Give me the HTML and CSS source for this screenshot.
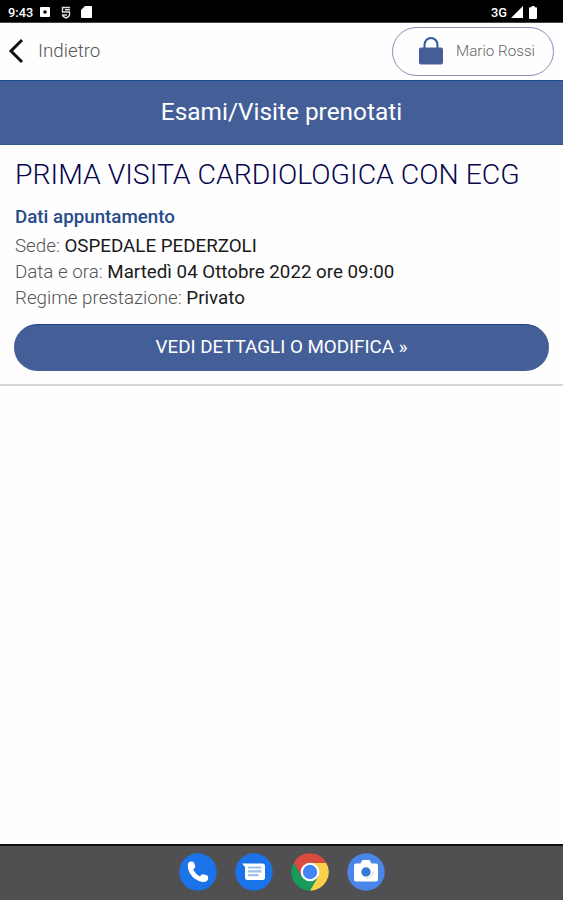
FILE: index.html
```html
<!DOCTYPE html>
<html lang="it">
<head>
<meta charset="UTF-8" />
<meta name="viewport" content="width=device-width, initial-scale=1" />
<title>Esami/Visite prenotati</title>
<link rel="stylesheet" href="styles.css">
</head>
<body>

<div class="statusbar">
  <span class="clock">9:43</span>
  <svg class="st-app" width="10" height="10" viewBox="0 0 10 10"><rect width="10" height="10" rx="1" fill="#fff"/><circle cx="5" cy="5" r="1.800" fill="#000"/></svg>
  <svg class="st-vpn" width="10" height="13" viewBox="0 0 10 13"><path d="M9 1.500H1.500V6h7v3q0 1.500-3.500 3-3.500-1.500-3.500-3M4 3.700h5M1 9h5" fill="none" stroke="#ddd" stroke-width="1.400"/></svg>
  <svg class="st-sd" width="11" height="12" viewBox="0 0 11 12"><path d="M4 0h6q1 0 1 1v10q0 1-1 1H1q-1 0-1-1V4z" fill="#fff"/></svg>
  <span class="network">3G</span>
  <svg class="st-signal" width="12" height="12" viewBox="0 0 12 12"><path d="M12 0v12H0z" fill="#fff"/></svg>
  <svg class="st-battery" width="8" height="13" viewBox="0 0 8 13"><path d="M2.500 0h3v1.300H7q1 0 1 1V12q0 1-1 1H1q-1 0-1-1V2.300q0-1 1-1h1.500z" fill="#fff"/></svg>
</div>

<header class="topbar">
  <a class="back">
    <svg width="16" height="26" viewBox="0 0 16 26"><path d="M14 2L3 13l11 11" fill="none" stroke="#111" stroke-width="3"/></svg>
    <span>Indietro</span>
  </a>
  <div class="user">
    <svg width="24" height="28" viewBox="0 0 24 28"><path d="M5.500 12V8a6.500 7 0 0 1 13 0v4" fill="none" stroke="#2e5c98" stroke-width="2"/><rect y="10.500" width="24" height="17" rx="2" fill="#445f98"/></svg>
    <span>Mario Rossi</span>
  </div>
</header>

<h1 class="page-title">Esami/Visite prenotati</h1>

<main>
  <section class="booking">
    <h2>PRIMA VISITA CARDIOLOGICA CON ECG</h2>
    <h3>Dati appuntamento</h3>
    <p>Sede: <b>OSPEDALE PEDERZOLI</b></p>
    <p>Data e ora: <b>Martedì 04 Ottobre 2022 ore 09:00</b></p>
    <p>Regime prestazione: <b>Privato</b></p>
    <a class="btn">VEDI DETTAGLI O MODIFICA »</a>
  </section>
</main>

<nav class="dock">
  <svg width="38" height="38" viewBox="0 0 38 38">
    <circle cx="19" cy="19" r="18.700" fill="#1a73e8"/>
    <path d="M9.500 9.500q3-2 5.500 0l1.300 4q.2 1.500-2.300 3 2.500 4.500 7 7 1.500-2.500 3-2.300l4.500 1.300q1.500 3-.5 5.500-3 1.700-7 .5Q11.500 25 9 15.500q-.8-4 .5-6z" fill="#fff"/>
  </svg>
  <svg width="38" height="38" viewBox="0 0 38 38">
    <circle cx="19" cy="19" r="18.700" fill="#1a73e8"/>
    <path d="M7 10.500h20.500q2.500 0 2.500 2.500v11.500q0 2.500-2.500 2.500h-15q-2.500 0-2.500-2.500V14z" fill="#fff"/>
    <path d="M13 14.500h13.500M13 18.300h13.500M13 22.100h10.500" stroke="#9dbff0" stroke-width="2.200"/>
  </svg>
  <svg width="38" height="38" viewBox="0 0 38 38">
    <path d="M2.800 9.650A18.700 18.700 0 0 0 19 37.700L27.100 23.700 19 19 10.900 23.700z" fill="#179c5b"/>
    <path d="M35.200 9.650A18.700 18.700 0 0 1 19 37.700L27.100 23.700 19 9.650z" fill="#fdd04b"/>
    <path d="M2.800 9.650A18.700 18.700 0 0 1 35.200 9.650H19L10.900 23.700z" fill="#d94a3f"/>
    <circle cx="19" cy="19" r="9.300" fill="#fff"/>
    <circle cx="19" cy="19" r="7.200" fill="#4285f4"/>
  </svg>
  <svg width="38" height="38" viewBox="0 0 38 38">
    <circle cx="19" cy="19" r="18.700" fill="#4a86e8"/>
    <path d="M9 10.500h4.500L15.500 7h7l2 3.500H29q2 0 2 2V26.500q0 2-2 2H9q-2 0-2-2V12.500q0-2 2-2z" fill="#fff"/>
    <circle cx="19" cy="19" r="4.700" fill="#3b78d4"/>
    <path d="M26 18.500a7 7 0 0 1-7 7" fill="none" stroke="#dcdcdc" stroke-width="1.200"/>
  </svg>
</nav>

</body>
</html>
```
FILE: styles.css
```css
* { box-sizing: border-box; }
html, body { height: 100%; }
body {
  margin: 0;
  display: flex;
  flex-direction: column;
  background: #fefefe;
  color: #222;
  font-family: Roboto, "Liberation Sans", sans-serif;
  overflow: hidden;
}
h1, h2, h3, p { margin: 0; }
svg { display: block; flex: none; }

.statusbar {
  flex: none;
  height: 23px;
  display: flex;
  align-items: center;
  padding: 2px 26px 0 8px;
  background: #000;
  border-bottom: 1px solid #444;
  color: #fff;
  font-size: 12.800px;
  font-weight: 500;
}
.st-app { margin-left: 7px; }
.st-vpn { margin-left: 11px; }
.st-sd { margin-left: 10px; }
.network { margin-left: auto; }
.st-signal { margin-left: 4px; }
.st-battery { margin-left: 6px; }

.topbar {
  flex: none;
  height: 57px;
  display: flex;
  align-items: center;
  justify-content: space-between;
  padding: 0 9px 1px 8px;
}
.back {
  display: flex;
  align-items: center;
  gap: 14px;
  margin-bottom: 1px;
  font-size: 18.750px;
  font-weight: 300;
  color: #555;
}
.user {
  width: 162px;
  height: 49px;
  display: flex;
  align-items: center;
  gap: 13px;
  padding-left: 26px;
  border: 1px solid #8c8cb4;
  border-radius: 25px;
  font-size: 15.200px;
  font-weight: 300;
  color: #666;
  white-space: nowrap;
}

.page-title {
  flex: none;
  height: 65px;
  background: #445f98;
  border-top: 1px solid #1f4c8c;
  border-bottom: 1px solid #31578f;
  color: #fff;
  font-size: 24.400px;
  font-weight: 400;
  line-height: 61px;
  text-align: center;
}

main { flex: 1; }
.booking {
  padding: 13px 14px 13px 15px;
  border-bottom: 2px solid #d6d6d6;
}
.booking h2 {
  font-size: 28.450px;
  font-weight: 300;
  line-height: 34px;
  color: #06064e;
  white-space: nowrap;
}
.booking h3 {
  margin: 12px 0 3px;
  font-size: 18.750px;
  font-weight: 500;
  line-height: 26px;
  color: #254b8a;
}
.booking p {
  font-size: 18.750px;
  font-weight: 300;
  line-height: 26px;
  color: #555;
}
.booking b {
  font-weight: 400;
  color: #1a1a1a;
}
.btn {
  display: block;
  height: 47px;
  margin: 13px 0 0 -1px;
  border-radius: 24px;
  border-top: 1px solid #1c418a;
  background: #445f98;
  color: #fff;
  font-size: 18.750px;
  line-height: 45px;
  text-align: center;
}

.dock {
  flex: none;
  height: 56px;
  display: flex;
  justify-content: center;
  gap: 18px;
  padding-top: 7px;
  background: #505052;
  border-top: 2px solid #111;
}
```
